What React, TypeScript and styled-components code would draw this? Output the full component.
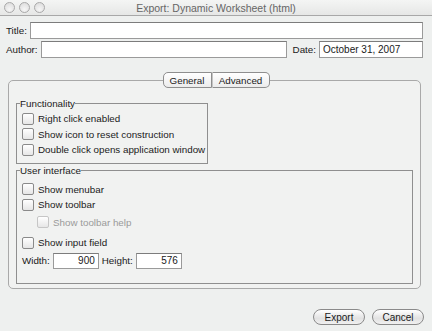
import styled, { createGlobalStyle } from 'styled-components';

const GlobalStyle = createGlobalStyle`
  html, body {
    margin: 0;
    padding: 0;
    background: #eef0ef;
  }
  body {
    font-family: 'Liberation Sans', Arial, sans-serif;
    font-size: 9.8px;
    color: #1a1a1a;
  }
`;

const Window = styled.div`
  width: 432px;
  height: 331px;
  display: flex;
  flex-direction: column;
  background: #eef0ef;
  overflow: hidden;
`;

const TitleBar = styled.div`
  height: 15px;
  display: flex;
  align-items: center;
  padding: 0 4px;
  background: linear-gradient(#f4f5f4, #e6e7e6);
  border-bottom: 1px solid #a8a8a8;
`;

const Lights = styled.div`
  display: flex;
  gap: 4px;
  width: 42px;
`;

const Light = styled.span`
  width: 9px;
  height: 9px;
  border-radius: 50%;
  border: 1px solid #a9a9a9;
  background: radial-gradient(circle at 50% 70%, #f6f6f6, #d9d9d9);
`;

const WindowTitle = styled.div`
  flex: 1;
  text-align: center;
  color: #666;
  font-size: 10.5px;
  margin-right: 42px;
`;

const Form = styled.div`
  display: flex;
  flex-direction: column;
  gap: 2px;
  padding: 6px 9px 0 6px;
`;

const Row = styled.div`
  display: flex;
  align-items: center;
  gap: 3px;
`;

const Label = styled.span`
  white-space: nowrap;
`;

const TextField = styled.input<{ w?: number }>`
  box-sizing: border-box;
  height: 17px;
  ${({ w }) => (w ? `width: ${w}px;` : 'flex: 1;')}
  min-width: 0;
  border: 1px solid #9a9a9a;
  border-top-color: #7c7c7c;
  background: #fff;
  padding: 0 3px;
  font-family: inherit;
  font-size: 10px;
  color: #1a1a1a;
  outline: none;
`;

const TabsRow = styled.div`
  display: flex;
  justify-content: center;
  margin-top: 14px;
  position: relative;
  z-index: 1;
`;

const Tab = styled.div<{ first?: boolean }>`
  height: 16px;
  box-sizing: border-box;
  display: flex;
  align-items: center;
  justify-content: center;
  width: ${({ first }) => (first ? 49 : 58)}px;
  border: 1px solid #8e8e8e;
  border-left-width: ${({ first }) => (first ? 1 : 0)}px;
  border-radius: ${({ first }) => (first ? '5px 0 0 5px' : '0 5px 5px 0')};
  background: linear-gradient(#ffffff, #ececec);
  & + & {
    border-left: 1px solid #c4c4c4;
  }
`;

const Panel = styled.div`
  margin: -8px 11px 0 8px;
  height: 209px;
  box-sizing: border-box;
  border: 1px solid #a9a9a9;
  border-radius: 5px;
  background: #f1f2f1;
  padding: 17px 7px 0 7px;
  display: flex;
  flex-direction: column;
  gap: 1px;
`;

const Group = styled.fieldset<{ w?: number; padBottom?: number }>`
  margin: 0;
  padding: 2px 0 ${({ padBottom }) => padBottom ?? 5}px 5px;
  border: 1px solid #8f8f8f;
  ${({ w }) => (w ? `width: ${w}px;` : '')}
  box-sizing: border-box;
  display: flex;
  flex-direction: column;
  min-width: 0;
`;

const Legend = styled.legend`
  padding: 0;
  margin-left: -2px;
  color: #1a1a1a;
`;

const CheckRow = styled.label<{ indent?: boolean; disabled?: boolean; gapTop?: number }>`
  display: flex;
  align-items: center;
  gap: 4px;
  height: 15.5px;
  padding-left: ${({ indent }) => (indent ? 15 : 0)}px;
  margin-top: ${({ gapTop }) => gapTop ?? 0}px;
  color: ${({ disabled }) => (disabled ? '#9a9a9a' : '#1a1a1a')};
  white-space: nowrap;
`;

const Box = styled.span<{ disabled?: boolean }>`
  width: 10px;
  height: 10px;
  border: 1px solid ${({ disabled }) => (disabled ? '#c6c6c6' : '#8a8a8a')};
  border-radius: 2px;
  background: linear-gradient(#ffffff, #e6e6e6);
  flex-shrink: 0;
`;

const SizeRow = styled.div`
  display: flex;
  align-items: center;
  gap: 3px;
  margin-top: 2px;
`;

const NumberField = styled(TextField)`
  text-align: right;
  height: 16px;
`;

const Footer = styled.div`
  display: flex;
  justify-content: flex-end;
  gap: 7px;
  padding: 20px 8px 0 0;
`;

const Button = styled.button`
  height: 16px;
  width: 52px;
  border: 1px solid #8a8a8a;
  border-radius: 8px;
  background: linear-gradient(#ffffff, #e2e2e2 60%, #f0f0f0);
  font-family: inherit;
  font-size: 10px;
  color: #1a1a1a;
  padding: 0;
`;

const App = () => (
  <>
    <GlobalStyle />
    <Window>
      <TitleBar>
        <Lights>
          <Light />
          <Light />
          <Light />
        </Lights>
        <WindowTitle>Export: Dynamic Worksheet (html)</WindowTitle>
      </TitleBar>
      <Form>
        <Row>
          <Label>Title:</Label>
          <TextField defaultValue="" />
        </Row>
        <Row>
          <Label>Author:</Label>
          <TextField defaultValue="" />
          <Label>&nbsp;Date:</Label>
          <TextField w={104} defaultValue="October 31, 2007" />
        </Row>
      </Form>
      <TabsRow>
        <Tab first>General</Tab>
        <Tab>Advanced</Tab>
      </TabsRow>
      <Panel>
        <Group w={192}>
          <Legend>Functionality</Legend>
          <CheckRow>
            <Box />
            Right click enabled
          </CheckRow>
          <CheckRow>
            <Box />
            Show icon to reset construction
          </CheckRow>
          <CheckRow>
            <Box />
            Double click opens application window
          </CheckRow>
        </Group>
        <Group padBottom={14}>
          <Legend>User interface</Legend>
          <CheckRow gapTop={4}>
            <Box />
            Show menubar
          </CheckRow>
          <CheckRow>
            <Box />
            Show toolbar
          </CheckRow>
          <CheckRow indent disabled gapTop={2}>
            <Box disabled />
            Show toolbar help
          </CheckRow>
          <CheckRow gapTop={5}>
            <Box />
            Show input field
          </CheckRow>
          <SizeRow>
            <Label>Width:</Label>
            <NumberField w={46} defaultValue="900" />
            <Label>Height:</Label>
            <NumberField w={46} defaultValue="576" />
          </SizeRow>
        </Group>
      </Panel>
      <Footer>
        <Button>Export</Button>
        <Button>Cancel</Button>
      </Footer>
    </Window>
  </>
);

export default App;
